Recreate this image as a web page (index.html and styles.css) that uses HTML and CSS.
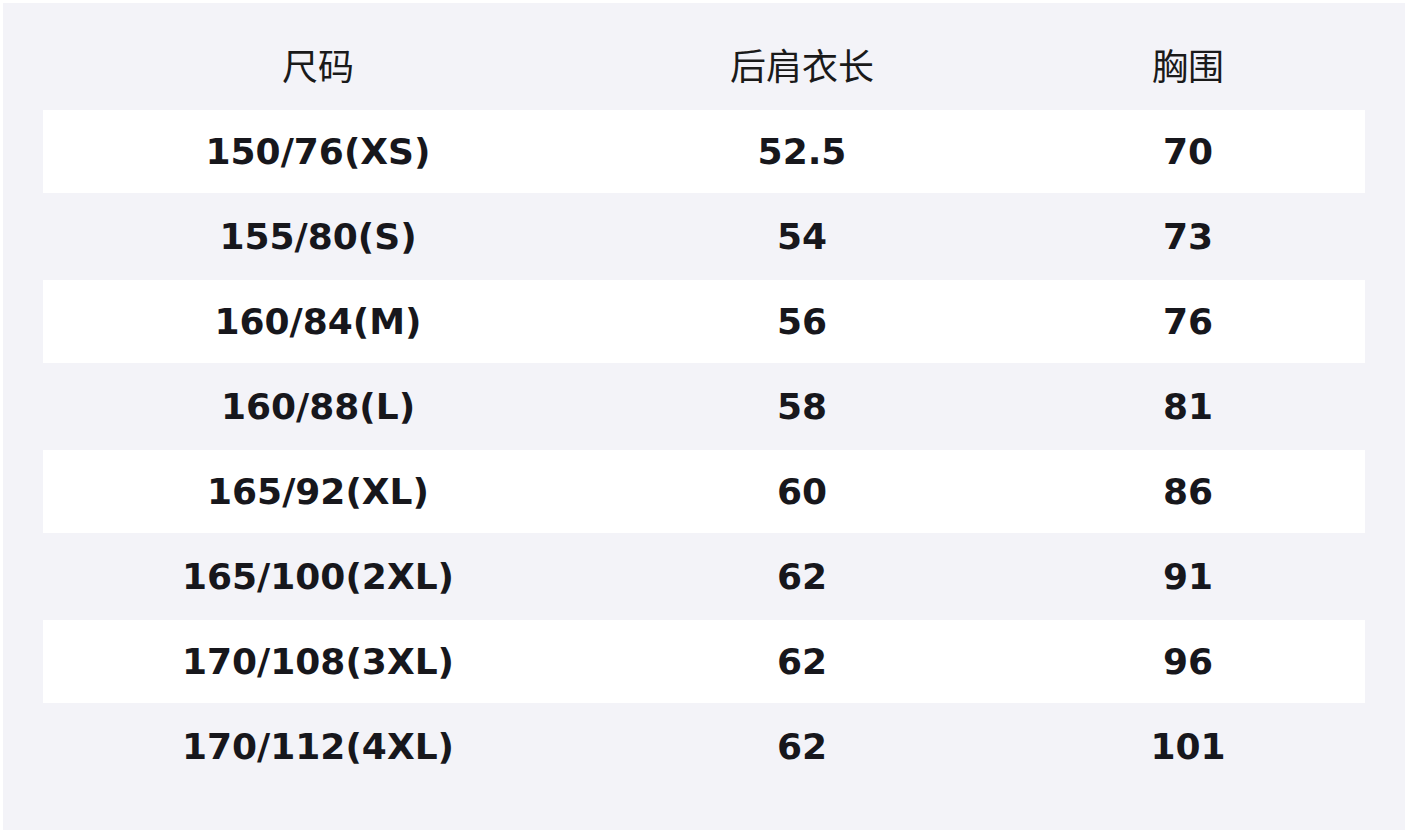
FILE: index.html
```html
<!DOCTYPE html>
<html lang="zh">
<head>
<meta charset="utf-8">
<link rel="stylesheet" href="styles.css">
</head>
<body>
<div class="panel">
  <div class="row head">
    <div>尺码</div><div>后肩衣长</div><div>胸围</div>
  </div>
  <div class="row odd"><div>150/76(XS)</div><div>52.5</div><div>70</div></div>
  <div class="row even"><div>155/80(S)</div><div>54</div><div>73</div></div>
  <div class="row odd"><div>160/84(M)</div><div>56</div><div>76</div></div>
  <div class="row even"><div>160/88(L)</div><div>58</div><div>81</div></div>
  <div class="row odd"><div>165/92(XL)</div><div>60</div><div>86</div></div>
  <div class="row even"><div>165/100(2XL)</div><div>62</div><div>91</div></div>
  <div class="row odd"><div>170/108(3XL)</div><div>62</div><div>96</div></div>
  <div class="row even"><div>170/112(4XL)</div><div>62</div><div>101</div></div>
</div>
</body>
</html>
```

FILE: styles.css
```css
html, body {
  margin: 0;
  padding: 0;
  background: #ffffff;
}
body {
  padding: 3px;
}
.panel {
  width: 1402px;
  height: 827px;
  box-sizing: border-box;
  background: #f3f3f8;
  padding: 40px 40px;
  font-family: "DejaVu Sans", "Noto Sans CJK SC", sans-serif;
  color: #17171c;
}
.row {
  display: grid;
  grid-template-columns: 550px 418px 354px;
  align-items: center;
  text-align: center;
  font-size: 36px;
  font-weight: bold;
}
.row > div {
  line-height: 1;
}
.head {
  height: 67px;
  font-family: "Noto Sans CJK SC", sans-serif;
  font-weight: normal;
  color: #1a1a1a;
  padding-bottom: 26px;
  box-sizing: border-box;
}
.odd {
  height: 83px;
  background: #ffffff;
}
.even {
  height: 87px;
}
```
